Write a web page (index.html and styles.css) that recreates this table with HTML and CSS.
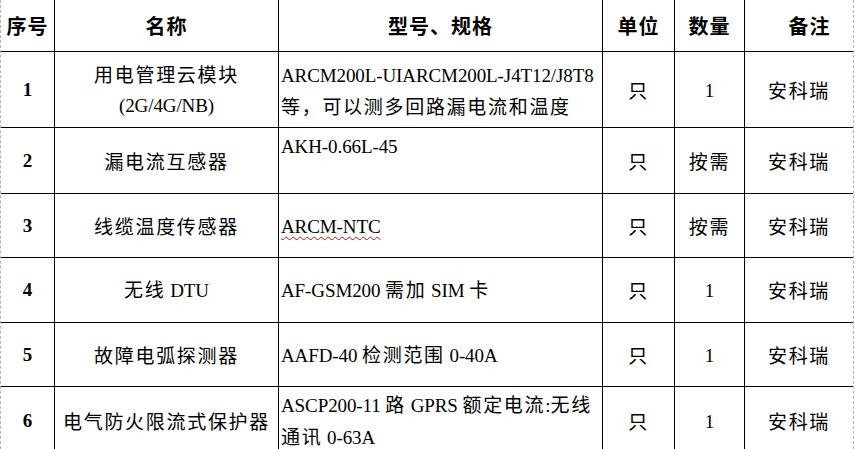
FILE: index.html
```html
<!DOCTYPE html>
<html lang="zh-CN">
<head>
<meta charset="utf-8">
<title>设备清单</title>
<link rel="stylesheet" href="styles.css">
</head>
<body>
<div class="sheet">
  <table class="grid">
    <colgroup>
      <col class="c-no"><col class="c-name"><col class="c-spec"><col class="c-unit"><col class="c-qty"><col class="c-note">
    </colgroup>
    <thead>
      <tr class="r-head">
        <th>序号</th><th>名称</th><th>型号、规格</th><th>单位</th><th>数量</th><th class="note-h">备注</th>
      </tr>
    </thead>
    <tbody>
      <tr class="r1">
        <td class="no">1</td>
        <td>用电管理云模块<br><span class="l">(2G/4G/NB)</span></td>
        <td class="spec"><span class="l">ARCM200L-UIARCM200L-J4T12/J8T8</span><br>等，可以测多回路漏电流和温度</td>
        <td>只</td><td><span class="l">1</span></td><td>安科瑞</td>
      </tr>
      <tr class="r2">
        <td class="no">2</td>
        <td>漏电流互感器</td>
        <td class="spec top"><span class="l">AKH-0.66L-45</span></td>
        <td>只</td><td>按需</td><td>安科瑞</td>
      </tr>
      <tr class="r3">
        <td class="no">3</td>
        <td>线缆温度传感器</td>
        <td class="spec"><span class="l spell">ARCM-NTC</span></td>
        <td>只</td><td>按需</td><td>安科瑞</td>
      </tr>
      <tr class="r4">
        <td class="no">4</td>
        <td>无线<span class="l"> DTU</span></td>
        <td class="spec"><span class="l">AF-GSM200 </span>需加<span class="l"> SIM </span>卡</td>
        <td>只</td><td><span class="l">1</span></td><td>安科瑞</td>
      </tr>
      <tr class="r5">
        <td class="no">5</td>
        <td>故障电弧探测器</td>
        <td class="spec"><span class="l">AAFD-40 </span>检测范围<span class="l"> 0-40A</span></td>
        <td>只</td><td><span class="l">1</span></td><td>安科瑞</td>
      </tr>
      <tr class="r6">
        <td class="no">6</td>
        <td>电气防火限流式保护器</td>
        <td class="spec"><span class="l">ASCP200-11 </span>路<span class="l"> GPRS </span>额定电流<span class="l">:</span>无线<br>通讯<span class="l"> 0-63A</span></td>
        <td>只</td><td><span class="l">1</span></td><td>安科瑞</td>
      </tr>
    </tbody>
  </table>
</div>
</body>
</html>
```

FILE: styles.css
```css
* {
  box-sizing: border-box;
}

body {
  margin: 0;
  background: #ffffff;
}

.sheet {
  width: 854px;
  height: 449px;
  overflow: hidden;
  border-left: 1px dashed #b4b4b4;
  border-right: 1px dashed #b4b4b4;
}

.grid {
  width: 852px;
  table-layout: fixed;
  border-collapse: separate;
  border-spacing: 0;
  font-family: "Noto Sans CJK SC", sans-serif;
  font-size: 19px;
  letter-spacing: 1.7px;
  color: #000000;
}

.c-no { width: 54px; }
.c-name { width: 224px; }
.c-spec { width: 324px; }
.c-unit { width: 72px; }
.c-qty { width: 70px; }
.c-note { width: 108px; }

.grid th,
.grid td {
  padding: 0;
  border-right: 1px solid #000000;
  border-bottom: 1px solid #000000;
  text-align: center;
  vertical-align: middle;
  white-space: nowrap;
  overflow: hidden;
  line-height: 30px;
}

.grid th:last-child,
.grid td:last-child {
  border-right: none;
}

.grid th {
  font-size: 20px;
  font-weight: 700;
  letter-spacing: 1px;
}

.grid th.note-h {
  padding-left: 21px;
}

.r-head { height: 52px; }
.r1 { height: 76px; }
.r2 { height: 66px; }
.r3 { height: 64px; }
.r4 { height: 65px; }
.r5 { height: 64px; }
.r6 { height: 68px; }

.grid td.no {
  font-family: "Liberation Serif", serif;
  font-weight: 700;
  font-size: 19px;
  letter-spacing: 0;
}

.grid td.spec {
  text-align: left;
  padding-left: 2px;
}

.grid td.top {
  vertical-align: top;
  padding-top: 2px;
}

.l {
  font-family: "Liberation Serif", serif;
  font-size: 19px;
  letter-spacing: -0.1px;
}

.spell {
  text-decoration: underline wavy #e00000;
  text-decoration-thickness: 1px;
  text-underline-offset: 3px;
}
```
